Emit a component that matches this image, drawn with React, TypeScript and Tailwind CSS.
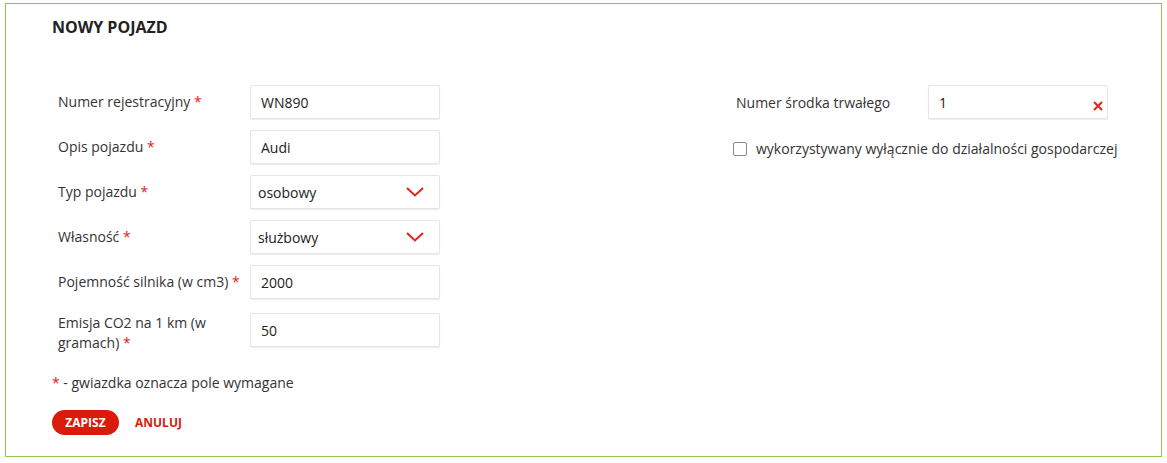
import { useState } from "react";

function Req() {
  return <span className="text-[#e2231a]">*</span>;
}

function TextField({ value }: { value: string }) {
  return (
    <div className="shrink-0 w-[190px] h-[34px] flex items-center px-[10px] bg-white border border-[#e6e6e6] rounded-[2px] shadow-[0_1px_1px_rgba(0,0,0,0.08)] text-[14px] text-[#222]">
      {value}
    </div>
  );
}

function SelectField({ value }: { value: string }) {
  return (
    <div className="shrink-0 w-[190px] h-[34px] flex items-center justify-between pl-[7px] pr-[15px] bg-white border border-[#e6e6e6] rounded-[2px] shadow-[0_1px_1px_rgba(0,0,0,0.08)] text-[14px] text-[#222]">
      <span>{value}</span>
      <svg width="18" height="10" viewBox="0 0 18 10" fill="none">
        <path d="M1 1 L9 8.5 L17 1" stroke="#e2231a" strokeWidth="2" />
      </svg>
    </div>
  );
}

function Row({ label, children, tall }: { label: React.ReactNode; children: React.ReactNode; tall?: boolean }) {
  return (
    <div className={`flex ${tall ? "items-start mt-[3px]" : "items-center"}`}>
      <div className="w-[198px] shrink-0 pl-[6px] pr-2 text-[14px] leading-[20px] text-[#333]">{label}</div>
      {children}
    </div>
  );
}

export default function App() {
  const [checked, setChecked] = useState(false);

  return (
    <div className="w-[1167px] h-[463px] bg-white pl-[5px] pt-[3px]" style={{ fontFamily: '"Open Sans", sans-serif' }}>
      <div className="w-[1157px] h-[454px] border border-[#8cc84b] pl-[46px] pr-[40px]">
        <h1 className="mt-[11px] text-[16px] leading-[24px] font-bold text-[#222]">NOWY POJAZD</h1>

        <div className="flex mt-[46px]">
          <div className="flex flex-col gap-[11px] w-[680px] shrink-0">
            <Row label={<>Numer rejestracyjny <Req /></>}>
              <TextField value="WN890" />
            </Row>
            <Row label={<>Opis pojazdu <Req /></>}>
              <TextField value="Audi" />
            </Row>
            <Row label={<>Typ pojazdu <Req /></>}>
              <SelectField value="osobowy" />
            </Row>
            <Row label={<>Własność <Req /></>}>
              <SelectField value="służbowy" />
            </Row>
            <Row label={<>Pojemność silnika (w cm3) <Req /></>}>
              <TextField value="2000" />
            </Row>
            <Row label={<>Emisja CO2 na 1 km (w gramach) <Req /></>} tall>
              <TextField value="50" />
            </Row>
          </div>

          <div className="flex flex-col">
            <div className="flex items-center">
              <div className="w-[196px] shrink-0 pl-[4px] text-[14px] text-[#333]">Numer środka trwałego</div>
              <div className="relative shrink-0 w-[180px] h-[34px] flex items-center px-[10px] bg-white border border-[#e6e6e6] rounded-[2px] shadow-[0_1px_1px_rgba(0,0,0,0.08)] text-[14px] text-[#222]">
                1
                <svg className="absolute right-[4px] top-[15px]" width="10" height="10" viewBox="0 0 10 10" fill="none">
                  <path d="M1 1 L9 9 M9 1 L1 9" stroke="#e2231a" strokeWidth="2" />
                </svg>
              </div>
            </div>
            <label className="flex items-center mt-[19px] ml-[1px] gap-[9px] text-[14px] text-[#333] cursor-pointer">
              <span
                onClick={() => setChecked(!checked)}
                className="w-[14px] h-[14px] border border-[#8a8a8a] rounded-[2px] bg-white"
              />
              wykorzystywany wyłącznie do działalności gospodarczej
            </label>
          </div>
        </div>

        <p className="mt-[20px] text-[14px] leading-[20px] text-[#333]">
          <Req /> - gwiazdka oznacza pole wymagane
        </p>

        <div className="flex items-center mt-[17px] gap-[16px]">
          <button className="h-[25px] w-[67px] rounded-full bg-[#dc1a0c] text-white text-[12px] font-bold">ZAPISZ</button>
          <button className="text-[#dc1a0c] text-[12px] font-bold">ANULUJ</button>
        </div>
      </div>
    </div>
  );
}
